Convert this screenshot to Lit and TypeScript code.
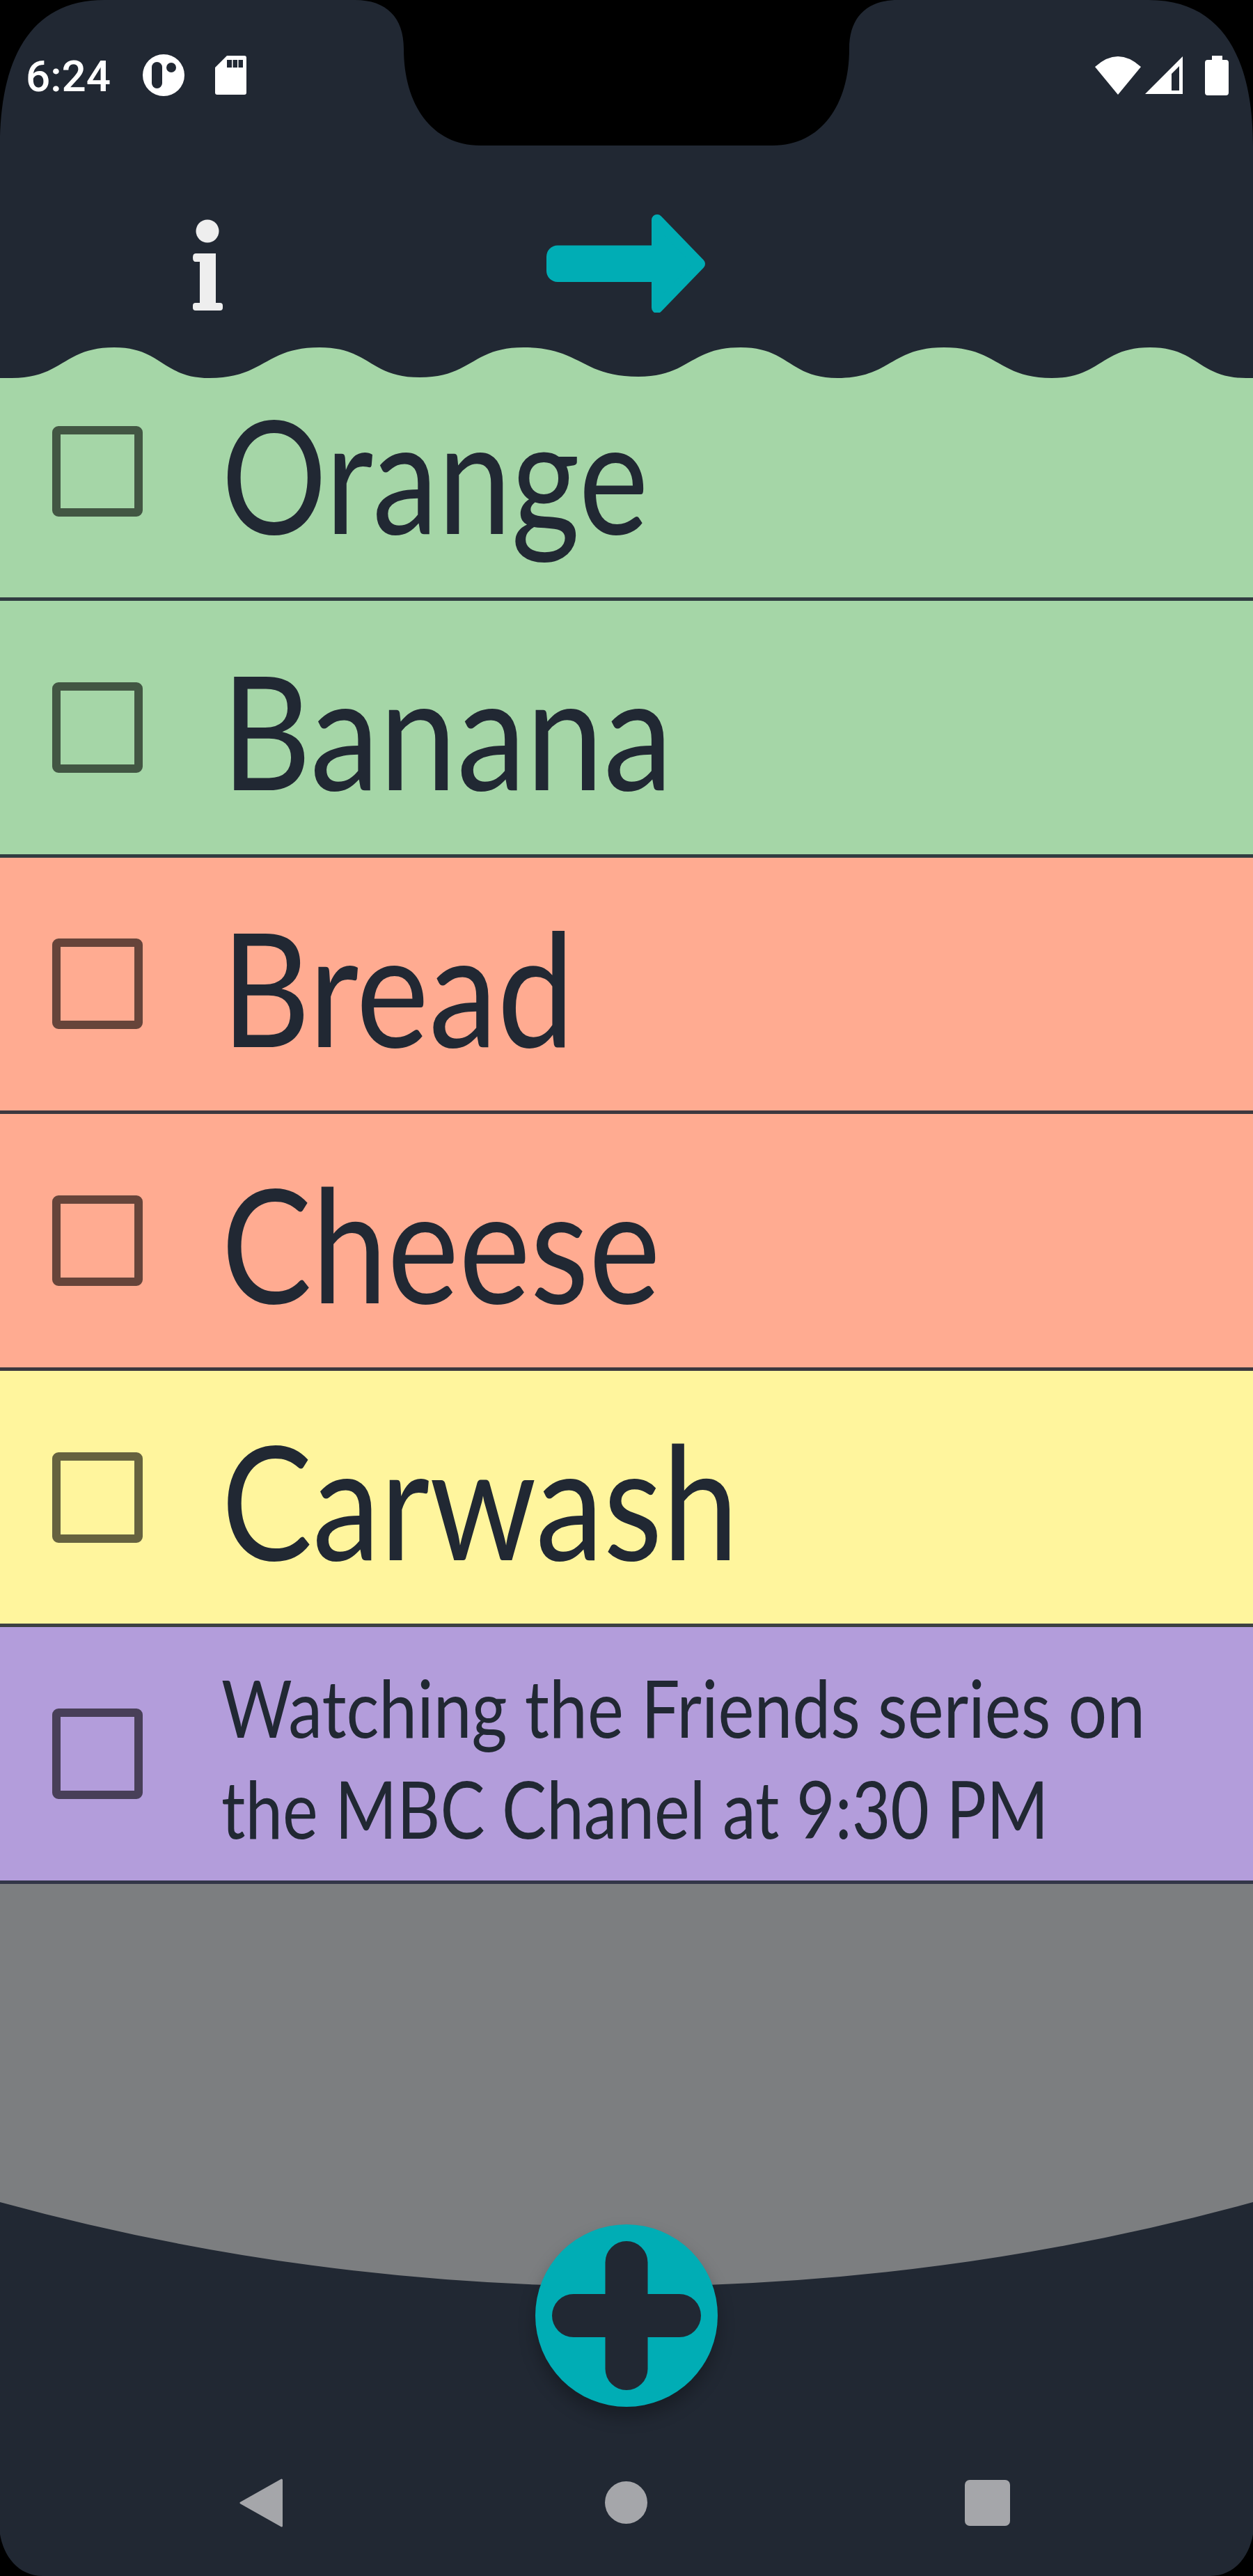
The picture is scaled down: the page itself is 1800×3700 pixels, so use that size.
import { LitElement, html, css, svg } from "lit";
import { customElement } from "lit/decorators.js";

// stretch squeezes the wider installed font down to the width each line has in the app
const ITEMS = [
  { lines: [{ text: "Orange", stretch: 0.83 }], tone: "green", first: true },
  { lines: [{ text: "Banana", stretch: 0.876 }], tone: "green" },
  { lines: [{ text: "Bread", stretch: 0.867 }], tone: "salmon" },
  { lines: [{ text: "Cheese", stretch: 0.853 }], tone: "salmon" },
  { lines: [{ text: "Carwash", stretch: 0.858 }], tone: "yellow" },
  {
    lines: [
      { text: "Watching the Friends series on", stretch: 0.862 },
      { text: "the MBC Chanel at 9:30 PM", stretch: 0.842 },
    ],
    tone: "purple",
    small: true,
  },
];

// crest and trough points of the wavy edge under the toolbar
const WAVE = [
  [0, 44], [17, 44], [164, 0], [301, 44], [459, 0], [603, 43], [752, 0], [917, 42],
  [1064, 0], [1203, 44], [1356, 0], [1511, 44], [1652, 0], [1790, 44], [1800, 44],
];

function wavePath() {
  let d = `M0 44`;
  for (let i = 1; i < WAVE.length; i++) {
    const [x0, y0] = WAVE[i - 1];
    const [x1, y1] = WAVE[i];
    const half = (x1 - x0) / 2;
    d += ` C${x0 + half} ${y0} ${x1 - half} ${y1} ${x1} ${y1}`;
  }
  return d + " V44 Z";
}

@customElement("app-root")
export class AppRoot extends LitElement {
  static styles = css`
    :host {
      display: block;
      width: 1800px;
      height: 3700px;
    }
    .screen {
      position: relative;
      display: flex;
      flex-direction: column;
      width: 1800px;
      height: 3700px;
      overflow: hidden;
      background: #212833;
    }
    svg {
      display: block;
      flex: none;
    }
    .bezel {
      position: absolute;
      inset: 0;
      pointer-events: none;
    }
    .status {
      display: flex;
      justify-content: space-between;
      align-items: flex-start;
      height: 209px;
      box-sizing: border-box;
      padding: 79px 35px 0 37px;
    }
    .status-left,
    .status-right {
      display: flex;
      align-items: center;
      height: 58px;
    }
    .time {
      width: 118px;
      margin-right: 50px;
      font: 500 62px/58px Roboto, sans-serif;
      color: #ffffff;
      white-space: nowrap;
      padding-top: 4px;
    }
    .gap-44 { margin-right: 44px; }
    .gap-32 { margin-right: 32px; }
    .gap-6 { margin-right: 6px; }
    .toolbar {
      display: flex;
      align-items: flex-start;
      height: 290px;
      box-sizing: border-box;
      padding: 99px 0 0 277px;
      gap: 465px;
    }
    .row {
      display: flex;
      align-items: center;
      height: 368.6px;
      box-sizing: border-box;
      padding-left: 75px;
      border-bottom: 5px solid rgba(33, 40, 51, 0.88);
    }
    .row.first {
      height: 320px;
      padding-bottom: 48px;
    }
    .green { background: #a5d6a7; }
    .salmon { background: #ffab91; }
    .yellow { background: #fff59d; }
    .purple { background: #b39ddb; }
    .check {
      flex: none;
      width: 130px;
      height: 130px;
      box-sizing: border-box;
      margin-right: 113px;
      border: 12px solid rgba(0, 0, 0, 0.6);
      border-radius: 9px;
    }
    .label {
      flex: none;
      font: 400 228px/1.2 Lato, "Open Sans", sans-serif;
      color: #212833;
      white-space: pre;
      padding-top: 6px;
    }
    .label.small {
      font-size: 114px;
      line-height: 145px;
      padding-top: 10px;
    }
    .line {
      transform-origin: left center;
    }
    .empty {
      flex: none;
      height: 457px;
      background: #7c7e80;
    }
    .foot {
      position: relative;
      flex: 1;
    }
    .fab {
      position: absolute;
      left: 769px;
      top: 32px;
      display: flex;
      align-items: center;
      justify-content: center;
      width: 262px;
      height: 262px;
      border-radius: 50%;
      background: #00adb5;
      box-shadow: 0 14px 24px rgba(0, 0, 0, 0.28);
    }
    .nav {
      display: grid;
      grid-template-columns: 525px 517px auto;
      align-items: center;
      padding: 276px 0 0 344px;
    }
  `;

  private renderStatus() {
    return html`
      <div class="status">
        <div class="status-left">
          <span class="time">6:24</span>
          <svg class="gap-44" width="60" height="60" viewBox="205 78 60 60">
            <circle cx="235" cy="108" r="30" fill="#fff"></circle>
            <rect x="218" y="89" width="15" height="38" rx="7.5" fill="#212833"></rect>
            <circle cx="246" cy="97" r="7" fill="#212833"></circle>
          </svg>
          <svg width="45" height="56" viewBox="309 80 45 56">
            <path fill="#fff" d="M326 80H351Q354 80 354 83V133Q354 136 351 136H312Q309 136 309 133V97Z"></path>
            <path fill="#212833" d="M326 86h7v11h-7zM334.500 86h6.500v11h-6.500zM342.500 86h6.500v11h-6.500z"></path>
          </svg>
        </div>
        <div class="status-right">
          <svg class="gap-6" width="66" height="55" viewBox="1573 79 66 55">
            <path fill="#fff" d="M1606 134L1573 94Q1606 64 1639 94Z"></path>
          </svg>
          <svg class="gap-32" width="54" height="54" viewBox="1645 80 54 54">
            <path fill="#fff" fill-rule="evenodd" d="M1645 134L1699 80V134ZM1683 105V129H1694V94Z"></path>
          </svg>
          <svg width="34" height="57" viewBox="1731 79 34 57">
            <path fill="#fff" d="M1741 79H1756V85H1761Q1765 85 1765 89V132Q1765 136 1761 136H1735Q1731 136 1731 132V89Q1731 85 1735 85H1741Z"></path>
          </svg>
        </div>
      </div>
    `;
  }

  private renderToolbar() {
    return html`
      <div class="toolbar">
        <svg width="43" height="141" viewBox="277 308 43 141">
          <circle cx="298" cy="332" r="16.500" fill="#eee"></circle>
          <path fill="#eee" d="M281 364H310V435H316Q320 435 320 439V442Q320 446 316 446H281Q277 446 277 442V439Q277 435 281 435H287V376H281Q277 376 277 370Q277 364 281 364Z"></path>
        </svg>
        <svg width="229" height="141" viewBox="785 308 229 141">
          <rect x="785" y="352.500" width="170" height="52.500" rx="16" fill="#00adb5"></rect>
          <path fill="#00adb5" stroke="#00adb5" stroke-width="16" stroke-linejoin="round" d="M944 316L1005 379L944 442Z"></path>
        </svg>
      </div>
    `;
  }

  render() {
    return html`
      <div class="screen">
        ${this.renderStatus()} ${this.renderToolbar()}
        <svg width="1800" height="44" viewBox="0 0 1800 44">
          <path d=${wavePath()} fill="#a5d6a7"></path>
        </svg>
        ${ITEMS.map(
          (item) => html`
            <div class="row ${item.tone} ${item.first ? "first" : ""}">
              <div class="check"></div>
              <div class="label ${item.small ? "small" : ""}">
                ${item.lines.map(
                  (line) => html`<div class="line" style="transform: scaleX(${line.stretch})">${line.text}</div>`
                )}
              </div>
            </div>
          `
        )}
        <div class="empty"></div>
        <div class="foot">
          <svg width="1800" height="121" viewBox="0 0 1800 121">
            <path fill="#7c7e80" d="M0 -1H1800V0A3408 3408 0 0 1 0 0Z"></path>
          </svg>
          <div class="nav">
            <svg width="62" height="70" viewBox="344 3560 62 70">
              <path fill="#a5a6aa" stroke="#a5a6aa" stroke-width="3" stroke-linejoin="round" d="M404.500 3562L346 3595L404.500 3628Z"></path>
            </svg>
            <svg width="61" height="61" viewBox="0 0 61 61">
              <circle cx="30.500" cy="30.500" r="30.500" fill="#a5a6aa"></circle>
            </svg>
            <svg width="65" height="66" viewBox="0 0 65 66">
              <rect width="65" height="66" rx="7" fill="#a5a6aa"></rect>
            </svg>
          </div>
          <div class="fab">
            <svg width="214" height="214" viewBox="0 0 214 214">
              <rect x="76.500" width="61" height="214" rx="30.500" fill="#212833"></rect>
              <rect y="76" width="214" height="62" rx="31" fill="#212833"></rect>
            </svg>
          </div>
        </div>
        <svg class="bezel" width="1800" height="3700" viewBox="0 0 1800 3700">
          ${svg`<path fill="#000" fill-rule="evenodd" d="M0 0H1800V3700H0Z
            M0 210C0 90 40 0 150 0H510C555 0 580 25 580 70C580 150 620 209 690 209H1110C1180 209 1220 150 1220 70C1220 25 1245 0 1290 0H1650C1760 0 1800 90 1800 210V3640C1795 3670 1775 3700 1738 3700H62C25 3700 5 3670 0 3640Z"></path>`}
        </svg>
      </div>
    `;
  }
}
